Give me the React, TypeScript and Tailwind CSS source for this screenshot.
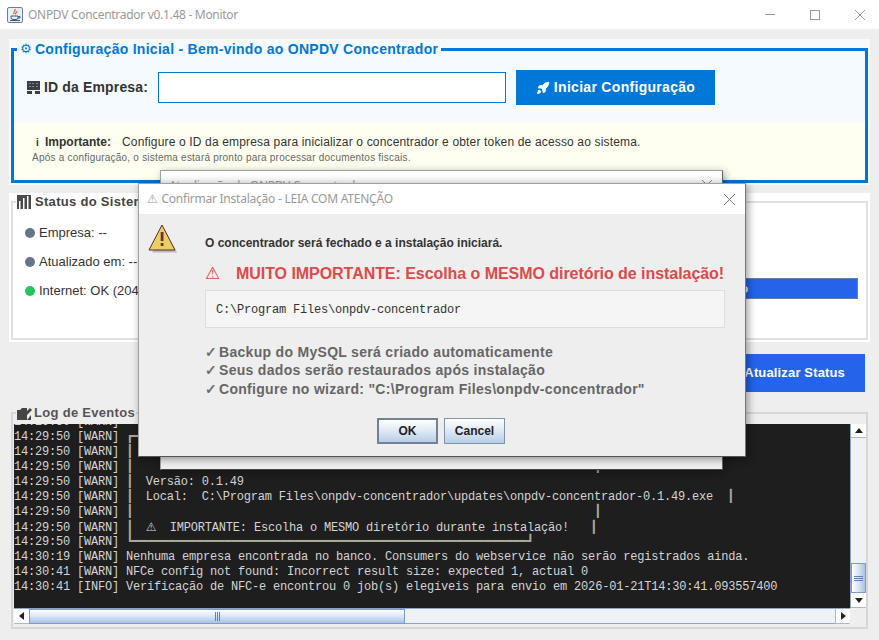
import { Rocket } from 'lucide-react';

const SANS = "font-['Liberation_Sans',Arial,sans-serif]";
const MONO = "font-['Liberation_Mono','Courier_New',monospace]";
const UI = "font-['Noto_Sans','Open_Sans',sans-serif] tracking-[-0.3px]";

function Bar() {
  return <span className="inline-block w-[5.8px] overflow-visible text-[#a9a99a]">┃</span>;
}

function LogLine({ stamp, children }: { stamp: string; children?: React.ReactNode }) {
  return (
    <div className="h-[15px] leading-[15px] whitespace-pre">
      {stamp} {children}
    </div>
  );
}

function BuildingIcon() {
  return (
    <svg width="13" height="13" viewBox="0 0 13 13" className="shrink-0">
      <rect x="0" y="0" width="13" height="13" fill="#3a3f47" />
      <rect x="0" y="9" width="13" height="1" fill="#eef4fa" />
      <rect x="5" y="9" width="3" height="4" fill="#eef4fa" />
      <rect x="2" y="2" width="2" height="1" fill="#7d8794" />
      <rect x="5" y="2" width="2" height="1" fill="#7d8794" />
      <rect x="9" y="2" width="2" height="1" fill="#7d8794" />
      <rect x="2" y="5" width="2" height="1" fill="#7d8794" />
      <rect x="5" y="5" width="2" height="1" fill="#7d8794" />
      <rect x="9" y="5" width="2" height="1" fill="#7d8794" />
    </svg>
  );
}

function ChartIcon() {
  return (
    <svg width="14" height="14" viewBox="0 0 14 14" className="shrink-0">
      <rect width="14" height="14" fill="#4a4a4a" />
      <rect x="2" y="6" width="1.5" height="8" fill="#fff" />
      <rect x="6" y="3" width="1.5" height="11" fill="#fff" />
      <rect x="10" y="1" width="1.5" height="13" fill="#fff" />
    </svg>
  );
}

function MemoIcon() {
  return (
    <svg width="15" height="13" viewBox="0 0 15 13" className="shrink-0">
      <path d="M0 3h3l2-2h5v12H0z" fill="#454545" />
      <path d="M8 6l5-5 2 2-5 5-3 1z" fill="#454545" />
      <path d="M10 13h4V8z" fill="#454545" />
    </svg>
  );
}

function JavaIcon() {
  return (
    <svg width="16" height="16" viewBox="0 0 16 16">
      <rect x="0.5" y="0.5" width="15" height="15" rx="1.5" fill="#e8eef5" stroke="#6f7f90" />
      <path d="M8 2c1 2-2 3-1 5M10 4c0 2-2 2-1.5 3.5" fill="none" stroke="#d9622b" strokeWidth="1.2" />
      <path d="M4 9h7v1.5a2 2 0 0 1-2 2H6a2 2 0 0 1-2-2zM11 9.5h2v1.5h-2M3 13.5h10" fill="none" stroke="#34608c" strokeWidth="1" />
    </svg>
  );
}

function WarningBig() {
  return (
    <svg width="30" height="30" viewBox="0 0 30 30">
      <path d="M15 3 L28 27 H3 Z" fill="#9a9a9a" opacity="0.6" transform="translate(1 1.5)" />
      <path d="M14 1 L27 26 H1 Z" fill="#e8cf66" stroke="#5c2b2b" strokeWidth="1" strokeLinejoin="round" />
      <rect x="12.7" y="8" width="2.8" height="9" fill="#7a2e2e" />
      <rect x="12.7" y="19" width="2.8" height="3" fill="#7a2e2e" />
    </svg>
  );
}

function SwingButton({ label, isDefault }: { label: string; isDefault?: boolean }) {
  return (
    <button
      className={`h-[26px] w-[61px] bg-gradient-to-b from-white via-[#dde8f3] to-[#b8cfe5] text-[12px] font-bold text-[#222] ${SANS} ${
        isDefault ? 'border-2 border-[#6e8299]' : 'border border-[#7c93ab]'
      }`}
    >
      {label}
    </button>
  );
}

function Arrow({ dir }: { dir: 'up' | 'down' | 'left' | 'right' }) {
  const d = { up: 'M0 6 L4 1 L8 6Z', down: 'M0 2 L8 2 L4 7Z', left: 'M6 0 V8 L1 4Z', right: 'M2 0 V8 L7 4Z' }[dir];
  return (
    <svg width="8" height="8" viewBox="0 0 8 8">
      <path d={d} fill="#222" />
    </svg>
  );
}

function CheckLine({ text }: { text: string }) {
  return (
    <div className="flex">
      <span className="w-[14px] font-['DejaVu_Sans',sans-serif] text-[14px] [-webkit-text-stroke:0.4px_#666]">✓</span>
      {text}
    </div>
  );
}

export default function App() {
  return (
    <div className={`relative flex h-[640px] w-[879px] flex-col overflow-hidden bg-[#eeeeee] ${SANS}`}>
      {/* barra de titulo */}
      <div className="flex h-[29px] shrink-0 items-center bg-white">
        <div className="ml-[7px]">
          <JavaIcon />
        </div>
        <span className={`ml-[5px] text-[12px] text-[#999] ${UI}`}>ONPDV Concentrador v0.1.48 - Monitor</span>
        <div className="ml-auto mr-[14px] flex items-center gap-[35px]">
          <div className="h-px w-[10px] bg-[#999]" />
          <div className="h-[10px] w-[10px] border border-[#999]" />
          <svg width="10" height="10" viewBox="0 0 10 10">
            <path d="M0 0L10 10M10 0L0 10" stroke="#999" />
          </svg>
        </div>
      </div>

      <div className="flex flex-col px-[9px] pt-[10px]">
        {/* configuracao inicial */}
        <div className="h-[146px] bg-[#f5faff] px-[2px] pt-px">
          <fieldset className="h-[143px] border-[3px] border-[#0078d7]">
            <legend className="ml-[3px] flex h-[18px] items-center px-[3px] text-[14px] leading-[18px] font-bold tracking-[0.28px] text-[#0078d7]">
              <span className="font-['DejaVu_Sans',sans-serif] text-[13px]">⚙</span>
              <span className="ml-[3px]">Configuração Inicial - Bem-vindo ao ONPDV Concentrador</span>
            </legend>
            <div className="flex h-[65px] items-start pl-[13px] pt-[12px]">
              <div className="flex h-[35px] items-center">
                <BuildingIcon />
                <span className="ml-[4px] text-[14px] font-bold tracking-[0.15px] text-[#333]">ID da Empresa:</span>
              </div>
              <input className="ml-[10px] mt-[2px] h-[31px] w-[348px] border border-[#0078d7] bg-white" />
              <button className="ml-[10px] flex h-[35px] w-[199px] items-center justify-center gap-[4px] bg-[#0078d7] text-[14px] font-bold tracking-[0.3px] text-white">
                <Rocket size={14} fill="white" strokeWidth={1.5} />
                Iniciar Configuração
              </button>
            </div>
            <div className="h-[56px] bg-[#fefff0] pl-[18px] pt-[10px]">
              <div className="flex h-[18px] items-center text-[12px] text-[#333]">
                <span className="ml-[4px] inline-block w-[9px] text-[10px] font-bold">i</span>
                <span className="font-bold">Importante:</span>
                <span className="ml-[11px] tracking-[0.16px]">Configure o ID da empresa para inicializar o concentrador e obter token de acesso ao sistema.</span>
              </div>
              <div className="mt-px text-[10px] leading-[12px] tracking-[0.22px] text-[#666]">
                Após a configuração, o sistema estará pronto para processar documentos fiscais.
              </div>
            </div>
          </fieldset>
        </div>

        {/* status do sistema */}
        <div className="mt-[8px] h-[149px] bg-white px-[2px]">
          <fieldset className="h-[147px] border-2 border-[#e0e0e0]">
            <legend className="ml-[3px] flex h-[18px] items-center px-[1px] text-[13px] font-bold tracking-[0.3px] text-[#444]">
              <ChartIcon />
              <span className="ml-[4px]">Status do Sistema</span>
            </legend>
            <div className="flex">
              <div className="flex w-[420px] flex-col gap-[10px] pl-[12px] pt-[12px] text-[13px] text-[#333]">
                <div className="flex h-[19px] items-center gap-[4px]">
                  <span className="h-[10px] w-[10px] rounded-full bg-[#64748b]" />
                  Empresa: --
                </div>
                <div className="flex h-[19px] items-center gap-[4px]">
                  <span className="h-[10px] w-[10px] rounded-full bg-[#64748b]" />
                  Atualizado em: --
                </div>
                <div className="flex h-[19px] items-center gap-[4px]">
                  <span className="h-[10px] w-[10px] rounded-full bg-[#22c55e]" />
                  Internet: OK (204)
                </div>
              </div>
              <div className="flex flex-1 flex-col pr-[8px] pt-[67px]">
                <div className="flex h-[21px] items-center justify-end border border-[#6b7f99] bg-[#2563eb] pr-[109px] text-[12px] font-bold text-white">
                  Baixar e Instalar Atualização
                </div>
              </div>
            </div>
          </fieldset>
        </div>

        {/* botoes */}
        <div className="mt-[12px] flex h-[38px] justify-end pr-[5px]">
          <button className="flex w-[180px] items-center justify-end bg-[#2563eb] pr-[20px] text-[13px] font-bold tracking-[0.15px] text-white">
            Atualizar Status
          </button>
        </div>

        {/* log de eventos */}
        <fieldset className="mx-[2px] mt-[12px] h-[225px] border-2 border-[#d6d6d6] pt-[2px]">
          <legend className="ml-[3px] flex h-[18px] items-center px-[1px] text-[13px] font-bold tracking-[0.3px] text-[#555]">
            <MemoIcon />
            <span className="ml-[2px]">Log de Eventos</span>
          </legend>
          <div className="ml-px flex h-[200px] flex-col">
            <div className="flex h-[184px] shrink-0">
              <div className={`h-full flex-1 overflow-hidden bg-[#1e1e1e] text-[12px] tracking-[-0.2px] text-[#d4d4d4] ${MONO}`}>
                <div className="-mt-[9.5px]">
                  <LogLine stamp="14:29:50 [WARN]" />
                  <LogLine stamp="14:29:50 [WARN]">
                    <span className="text-[#a9a99a]">┏━━━</span>
                  </LogLine>
                  <LogLine stamp="14:29:50 [WARN]"><Bar /></LogLine>
                  <LogLine stamp="14:29:50 [WARN]">
                    <Bar />
                    {' '.repeat(66)}
                    <Bar />
                  </LogLine>
                  <LogLine stamp="14:29:50 [WARN]">
                    <Bar />
                    {'  Versão: 0.1.49'}
                  </LogLine>
                  <LogLine stamp="14:29:50 [WARN]">
                    <Bar />
                    {'  Local:  C:\\Program Files\\onpdv-concentrador\\updates\\onpdv-concentrador-0.1.49.exe  '}
                    <Bar />
                  </LogLine>
                  <LogLine stamp="14:29:50 [WARN]">
                    <Bar />
                    {' '.repeat(66)}
                    <Bar />
                  </LogLine>
                  <LogLine stamp="14:29:50 [WARN]">
                    <Bar />
                    {'  '}
                    <span className="inline-block w-[10px] font-['DejaVu_Sans',sans-serif] text-[12px] tracking-normal">⚠</span>
                    {'  IMPORTANTE: Escolha o MESMO diretório durante instalação!   '}
                    <Bar />
                  </LogLine>
                  <LogLine stamp="14:29:50 [WARN]">
                    <span className="text-[#a9a99a]">┗{'━'.repeat(56)}┛</span>
                  </LogLine>
                  <LogLine stamp="14:30:19 [WARN]">Nenhuma empresa encontrada no banco. Consumers do webservice não serão registrados ainda.</LogLine>
                  <LogLine stamp="14:30:41 [WARN]">NFCe config not found: Incorrect result size: expected 1, actual 0</LogLine>
                  <LogLine stamp="14:30:41 [INFO]">Verificação de NFC-e encontrou 0 job(s) elegíveis para envio em 2026-01-21T14:30:41.093557400</LogLine>
                </div>
              </div>
              {/* scroll vertical */}
              <div className="flex h-full w-[16px] flex-col border-l border-[#8aa5c8] bg-[#eef2f7]">
                <div className="flex h-[14px] items-center justify-center border-b border-[#a8b8c8] bg-white">
                  <Arrow dir="up" />
                </div>
                <div className="flex-1" />
                <div className="flex h-[30px] flex-col items-center justify-center gap-px border border-[#7d9bd0] bg-gradient-to-r from-white via-[#d8e5f5] to-[#a9c2e6]">
                  <div className="h-px w-[9px] bg-[#5f7fae]" />
                  <div className="h-px w-[9px] bg-[#5f7fae]" />
                  <div className="h-px w-[9px] bg-[#5f7fae]" />
                </div>
                <div className="flex h-[15px] items-center justify-center border-b border-[#a8b8c8] bg-white">
                  <Arrow dir="down" />
                </div>
              </div>
            </div>
            {/* scroll horizontal */}
            <div className="flex h-[16px] w-[836px] border-t border-[#8aa5c8] bg-[#eef2f7]">
              <div className="flex w-[15px] items-center justify-center border-b border-[#a8b8c8] bg-white">
                <Arrow dir="left" />
              </div>
              <div className="flex w-[376px] items-center justify-center gap-px border border-[#7d9bd0] bg-gradient-to-b from-white via-[#d8e5f5] to-[#a9c2e6]">
                <div className="h-[9px] w-px bg-[#5f7fae]" />
                <div className="h-[9px] w-px bg-[#5f7fae]" />
                <div className="h-[9px] w-px bg-[#5f7fae]" />
              </div>
              <div className="flex-1 border-b border-[#8aa5c8]" />
              <div className="flex w-[15px] items-center justify-center border-b border-l border-[#a8b8c8] bg-white">
                <Arrow dir="right" />
              </div>
            </div>
          </div>
        </fieldset>
      </div>

      {/* dialogo de tras */}
      <div className="absolute left-[160px] top-[170px] flex h-[300px] w-[563px] flex-col border border-[#a0a0a0] border-b-[#444] border-r-[#666] bg-[#eeeeee] shadow-[2px_2px_8px_rgba(0,0,0,0.35)]">
        <div className="flex h-[30px] shrink-0 items-start justify-between bg-gradient-to-b from-white to-[#e8e8e8] pl-[8px] pr-[10px] pt-[6px]">
          <span className={`text-[12px] text-[#999] ${UI}`}>Atualização do ONPDV Concentrador</span>
          <svg width="10" height="10" viewBox="0 0 10 10" className="mt-[3px]">
            <path d="M0 0L10 10M10 0L0 10" stroke="#888" />
          </svg>
        </div>
        <div className="mt-[254px] flex justify-center gap-[5px]">
          <div className="h-[2px] w-[108px] bg-[#6b7f99]" />
          <div className="h-[2px] w-[108px] bg-[#6b7f99]" />
        </div>
      </div>

      {/* dialogo da frente */}
      <div className="absolute left-[138px] top-[183px] flex h-[274px] w-[608px] flex-col border border-[#a0a0a0] border-b-[#555] border-r-[#777] bg-[#eeeeee] shadow-[2px_2px_8px_rgba(0,0,0,0.4)]">
        <div className="flex h-[30px] shrink-0 items-center justify-between bg-white pl-[8px] pr-[10px]">
          <span className={`text-[12px] text-[#999] ${UI}`}>
            <span className="font-['DejaVu_Sans',sans-serif] text-[12px]">⚠</span>
            <span className="ml-[4px] tracking-[-0.24px]">Confirmar Instalação - LEIA COM ATENÇÃO</span>
          </span>
          <svg width="11" height="11" viewBox="0 0 11 11">
            <path d="M0 0L11 11M11 0L0 11" stroke="#777" />
          </svg>
        </div>
        <div className="flex flex-1 pl-[9px] pt-[10px]">
          <div className="w-[57px] shrink-0">
            <WarningBig />
          </div>
          <div className="flex w-[520px] flex-col">
            <div className="mt-[11px] h-[16px] text-[12px] leading-[16px] font-bold text-[#333]">
              O concentrador será fechado e a instalação iniciará.
            </div>
            <div className="mt-[13px] flex h-[20px] items-center text-[16px] font-bold tracking-[-0.05px] whitespace-nowrap text-[#dc4a4a]">
              <span className="w-[31px] font-['DejaVu_Sans',sans-serif] text-[17px]">⚠</span>
              MUITO IMPORTANTE: Escolha o MESMO diretório de instalação!
            </div>
            <div className={`mt-[6px] flex h-[38px] items-center border border-[#dddddd] bg-[#f5f5f5] pl-[10px] pt-[2px] text-[12px] tracking-[-0.2px] text-[#333] ${MONO}`}>
              C:\Program Files\onpdv-concentrador
            </div>
            <div className="mt-[15px] flex flex-col text-[14px] leading-[18.4px] font-bold tracking-[0.3px] text-[#666]">
              <CheckLine text="Backup do MySQL será criado automaticamente" />
              <CheckLine text="Seus dados serão restaurados após instalação" />
              <CheckLine text={'Configure no wizard: "C:\\Program Files\\onpdv-concentrador"'} />
            </div>
          </div>
        </div>
        <div className="mb-[12px] flex justify-center gap-[6px] pr-[2px]">
          <SwingButton label="OK" isDefault />
          <SwingButton label="Cancel" />
        </div>
      </div>
    </div>
  );
}
